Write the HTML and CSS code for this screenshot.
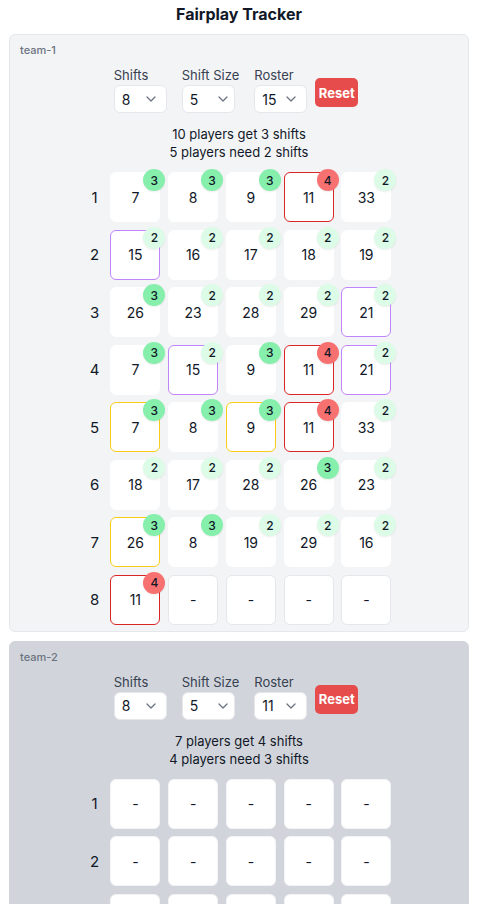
FILE: index.html
```html
<!DOCTYPE html>
<html lang="en">
<head>
    <meta charset="UTF-8">
    <meta name="viewport" content="width=device-width, initial-scale=1.0">
    <title>Fairplay Tracker</title>
    <link rel="stylesheet" href="styles.css">
</head>
<body>
    <h1>Fairplay Tracker</h1>
    <div id="teams"></div>
    <script>
        var teams = [
            {
                name: "team-1",
                shifts: 8,
                size: 5,
                roster: 15,
                theme: "light",
                rows: [
                    [[7, 3], [8, 3], [9, 3], [11, 4, "red"], [33, 2]],
                    [[15, 2, "purple"], [16, 2], [17, 2], [18, 2], [19, 2]],
                    [[26, 3], [23, 2], [28, 2], [29, 2], [21, 2, "purple"]],
                    [[7, 3], [15, 2, "purple"], [9, 3], [11, 4, "red"], [21, 2, "purple"]],
                    [[7, 3, "yellow"], [8, 3], [9, 3, "yellow"], [11, 4, "red"], [33, 2]],
                    [[18, 2], [17, 2], [28, 2], [26, 3], [23, 2]],
                    [[26, 3, "yellow"], [8, 3], [19, 2], [29, 2], [16, 2]],
                    [[11, 4, "red"], null, null, null, null]
                ]
            },
            {
                name: "team-2",
                shifts: 8,
                size: 5,
                roster: 11,
                theme: "dark",
                rows: []
            }
        ];

        var chevron = '<svg class="chevron" width="10" height="6" viewBox="0 0 10 6"><path d="M1 1l4 4 4-4" fill="none" stroke="#6b7280" stroke-width="1.3" stroke-linecap="round" stroke-linejoin="round"/></svg>';

        function selectBox(value) {
            return '<div class="select-wrap"><select class="select"><option>' + value + '</option></select>' + chevron + '</div>';
        }

        function summary(team) {
            var total = team.shifts * team.size;
            var base = Math.floor(total / team.roster);
            var extra = total % team.roster;
            return '<p>' + extra + ' players get ' + (base + 1) + ' shifts</p>' +
                   '<p>' + (team.roster - extra) + ' players need ' + base + ' shifts</p>';
        }

        function cell(c) {
            if (!c) {
                return '<div class="cell empty">-</div>';
            }
            var cls = "cell";
            if (c[2]) cls += " mark-" + c[2];
            return '<div class="' + cls + '">' + c[0] +
                   '<span class="badge count-' + c[1] + '">' + c[1] + '</span></div>';
        }

        var html = "";
        teams.forEach(function (team) {
            html += '<section class="team ' + team.theme + '">';
            html += '<div class="team-name">' + team.name + '</div>';
            html += '<div class="controls">';
            html += '<label class="field"><span>Shifts</span>' + selectBox(team.shifts) + '</label>';
            html += '<label class="field"><span>Shift Size</span>' + selectBox(team.size) + '</label>';
            html += '<label class="field"><span>Roster</span>' + selectBox(team.roster) + '</label>';
            html += '<button class="reset">Reset</button>';
            html += '</div>';
            html += '<div class="summary">' + summary(team) + '</div>';
            html += '<div class="grid">';
            for (var r = 0; r < team.shifts; r++) {
                html += '<div class="row-num">' + (r + 1) + '</div>';
                var row = team.rows[r] || [];
                for (var i = 0; i < team.size; i++) {
                    html += cell(row[i]);
                }
            }
            html += '</div></section>';
        });
        document.getElementById("teams").innerHTML = html;
    </script>
</body>
</html>
```

FILE: styles.css
```css
body {
    margin: 0;
    padding: 0 11px 0 9px;
    font-family: Inter, "Noto Sans", sans-serif;
    color: #111827;
    background-color: #fff;
}

h1 {
    margin: 0 0 6px;
    font-size: 16px;
    line-height: 28px;
    font-weight: 700;
    text-align: center;
}

.team {
    padding: 7px 10px 6px;
    margin-bottom: 9px;
    border: 1px solid #e5e7eb;
    border-radius: 6px;
}

.team.light {
    background-color: #f3f4f6;
}

.team.dark {
    background-color: #d1d5db;
    border-color: #d1d5db;
}

.team-name {
    font-size: 11px;
    line-height: 16px;
    font-weight: 500;
    color: #6b7280;
}

.controls {
    display: flex;
    justify-content: center;
    align-items: center;
    gap: 15px;
    margin-top: 8px;
}

.field {
    display: flex;
    flex-direction: column;
    font-size: 13px;
    line-height: 18px;
    color: #374151;
}

.select-wrap {
    position: relative;
    margin-top: 1px;
}

.select {
    appearance: none;
    -webkit-appearance: none;
    width: 53px;
    height: 28px;
    padding: 0 0 0 7px;
    border: 1px solid #e5e7eb;
    border-radius: 6px;
    background-color: #fff;
    font-family: inherit;
    font-size: 14px;
    color: #111827;
}

.chevron {
    position: absolute;
    right: 11px;
    top: 11px;
    pointer-events: none;
}

.reset {
    margin: 6px 6px 0 -7px;
    width: 43px;
    height: 29px;
    padding: 0;
    border: none;
    border-radius: 5px;
    background-color: #e64c4c;
    color: #fff;
    font-family: inherit;
    font-size: 13px;
    font-weight: 700;
    cursor: pointer;
}

.summary {
    margin-top: 12px;
    text-align: center;
    font-size: 13px;
    line-height: 18px;
}

.summary p {
    margin: 0;
}

.grid {
    display: grid;
    grid-template-columns: 16px repeat(5, 50px);
    grid-auto-rows: 50px;
    column-gap: 7.75px;
    row-gap: 7.5px;
    justify-content: center;
    margin-top: 11px;
}

.row-num {
    display: flex;
    align-items: center;
    justify-content: center;
    font-size: 15px;
}

.cell {
    position: relative;
    display: flex;
    align-items: center;
    justify-content: center;
    box-sizing: border-box;
    border: 1px solid #fff;
    border-radius: 6px;
    background-color: #fff;
    font-size: 14px;
}

.cell.empty {
    border-color: #e5e7eb;
}

.team.dark .cell.empty {
    border-color: #f3f4f6;
}

.mark-red {
    border-color: #dc2626;
}

.mark-purple {
    border-color: #c084fc;
}

.mark-yellow {
    border-color: #facc15;
}

.badge {
    position: absolute;
    top: -4px;
    right: -6px;
    width: 22px;
    height: 22px;
    border-radius: 50%;
    display: flex;
    align-items: center;
    justify-content: center;
    font-size: 12px;
    font-weight: 500;
    color: #111827;
    box-shadow: 0 1px 2px rgba(0, 0, 0, 0.08);
}

.count-2 {
    background-color: #dcfce7;
}

.count-3 {
    background-color: #86efac;
}

.count-4 {
    background-color: #f87171;
}
```
